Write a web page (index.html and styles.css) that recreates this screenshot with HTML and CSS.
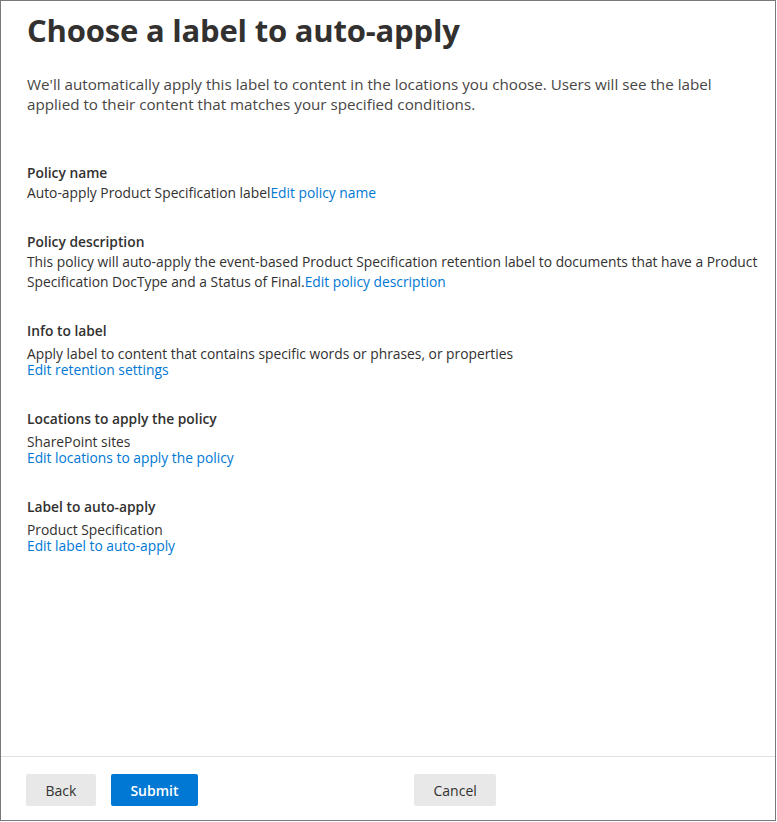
FILE: index.html
```html
<!DOCTYPE html>
<html lang="en">
<head>
<meta charset="utf-8">
<title>Choose a label to auto-apply</title>
<link rel="stylesheet" href="styles.css">
</head>
<body>
<div class="page">
  <main class="content">
    <h1 class="title">Choose a label to auto-apply</h1>
    <p class="intro">We'll automatically apply this label to content in the locations you choose. Users will see the label applied to their content that matches your specified conditions.</p>

    <section class="section">
      <h2 class="heading">Policy name</h2>
      <p class="value">Auto-apply Product Specification label<a class="link" href="#">Edit policy name</a></p>
    </section>

    <section class="section">
      <h2 class="heading">Policy description</h2>
      <p class="value">This policy will auto-apply the event-based Product Specification retention label to documents that have a Product Specification DocType and a Status of Final.<a class="link" href="#">Edit policy description</a></p>
    </section>

    <section class="section compact">
      <h2 class="heading">Info to label</h2>
      <p class="value">Apply label to content that contains specific words or phrases, or properties</p>
      <a class="link block" href="#">Edit retention settings</a>
    </section>

    <section class="section compact">
      <h2 class="heading">Locations to apply the policy</h2>
      <p class="value">SharePoint sites</p>
      <a class="link block" href="#">Edit locations to apply the policy</a>
    </section>

    <section class="section compact">
      <h2 class="heading">Label to auto-apply</h2>
      <p class="value">Product Specification</p>
      <a class="link block" href="#">Edit label to auto-apply</a>
    </section>
  </main>

  <footer class="footer">
    <button class="btn btn-default" type="button">Back</button>
    <button class="btn btn-primary" type="button">Submit</button>
    <button class="btn btn-default btn-cancel" type="button">Cancel</button>
  </footer>
</div>
</body>
</html>
```

FILE: styles.css
```css
html, body {
  margin: 0;
  padding: 0;
  background: #ffffff;
}

body {
  font-family: "Open Sans", "Noto Sans", "Liberation Sans", sans-serif;
  color: #323130;
}

.page {
  box-sizing: border-box;
  width: 776px;
  height: 821px;
  border: 1px solid #7a7a7a;
  display: flex;
  flex-direction: column;
}

.content {
  flex: 1;
  padding: 0 8px 0 26px;
}

.title {
  margin: 9px 0 0;
  font-size: 31px;
  line-height: 40px;
  font-weight: 700;
  color: #323130;
  letter-spacing: -0.2px;
}

.intro {
  max-width: 700px;
  margin: 24px 0 0;
  font-size: 15.2px;
  line-height: 20px;
  color: #484644;
}

.section {
  margin-top: 29px;
}

.intro + .section {
  margin-top: 49px;
}

.heading {
  margin: 0;
  font-size: 13.8px;
  line-height: 20px;
  font-weight: 600;
  color: #323130;
}

.value {
  margin: 0;
  font-size: 13.8px;
  line-height: 20px;
  color: #323130;
}

.link {
  color: #0078d4;
  text-decoration: none;
}

.compact {
  padding-bottom: 2px;
}

.compact .value {
  margin-top: 5px;
  line-height: 16px;
}

.link.block {
  display: block;
  font-size: 13.8px;
  line-height: 16px;
}

.footer {
  flex: none;
  display: flex;
  align-items: center;
  gap: 15px;
  border-top: 1px solid #e1e1e1;
  padding: 17px 25px 14px;
}

.btn {
  height: 32px;
  padding: 0 19.5px;
  border: none;
  border-radius: 2px;
  font-family: inherit;
  font-size: 14px;
  cursor: pointer;
}

.btn-default {
  background: #e8e8e8;
  color: #323130;
}

.btn-primary {
  background: #0078d4;
  color: #ffffff;
  font-weight: 600;
}

.btn-cancel {
  margin-left: 201px;
}
```
